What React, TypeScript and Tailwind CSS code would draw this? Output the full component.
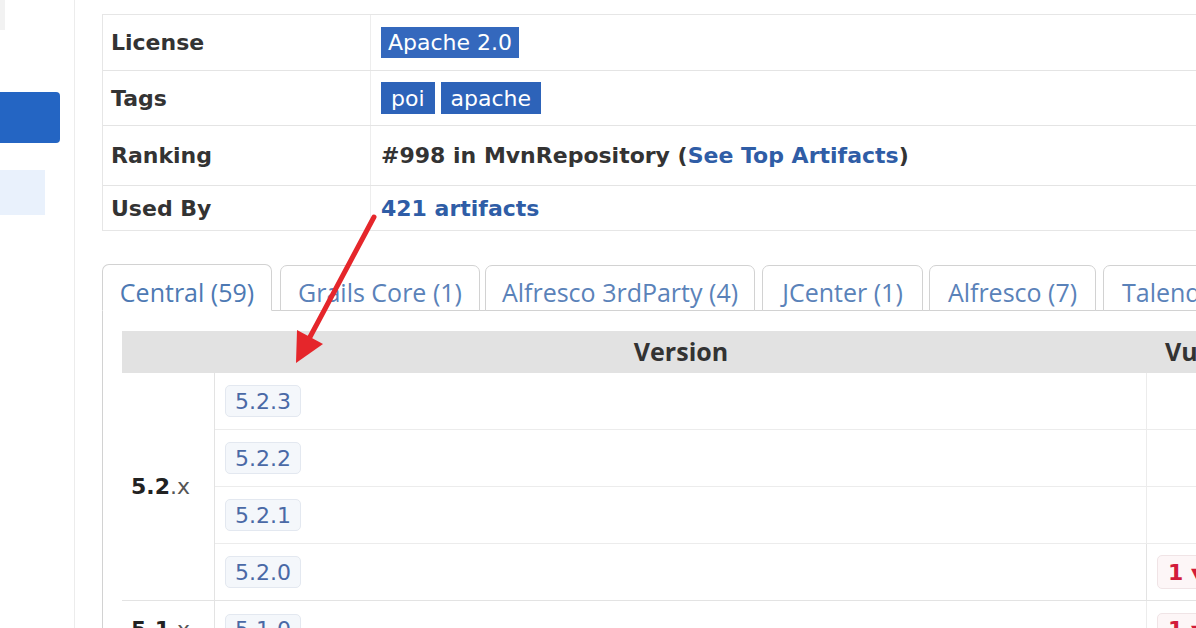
import React from "react";

const verdana = "font-['DejaVu_Sans','Liberation_Sans',sans-serif]";
const open = "font-['Open_Sans','Liberation_Sans',sans-serif]";

function InfoRow({ label, h, last, children }: { label: string; h: string; last?: boolean; children: React.ReactNode }) {
  return (
    <div className={`flex ${h} ${last ? "" : "border-b border-[#e4e4e4]"}`}>
      <div className="w-[268px] shrink-0 border-r border-[#ededed] pl-[8px] flex items-center font-bold text-[22px] text-[#333]">
        {label}
      </div>
      <div className="flex-1 pl-[10px] flex items-center text-[22px]">{children}</div>
    </div>
  );
}

function VerBadge({ v }: { v: string }) {
  return (
    <span className="inline-flex items-center h-[32px] px-[9px] rounded-[5px] bg-[#f4f7fb] border border-[#e3e8f0] text-[22px] text-[#4a69a6]">
      {v}
    </span>
  );
}

function VulnBadge() {
  return (
    <span className="inline-flex items-center h-[34px] px-[10px] rounded-[5px] bg-[#fdf6f7] border border-[#f0e4e6] text-[22px] font-bold text-[#d21c3a] whitespace-nowrap">
      1 ▾
    </span>
  );
}

const tabBase =
  "shrink-0 h-[46px] -mb-px pt-[10px] flex items-center justify-center rounded-t-[7px] border border-[#d2d2d2] bg-white text-[25px] text-[#5a82b9] whitespace-nowrap overflow-hidden";

export default function App() {
  const versions = ["5.2.3", "5.2.2", "5.2.1", "5.2.0"];
  return (
    <div className={`relative w-[1196px] h-[628px] overflow-hidden bg-white flex ${verdana}`}>
      <aside className="w-[75px] shrink-0 border-r border-[#ececec] flex flex-col">
        <div className="h-[30px] w-[5px] bg-[#f2f2f2]" />
        <div className="mt-[62px] h-[51px] w-[60px] bg-[#2465c3] rounded-r-[4px]" />
        <div className="mt-[27px] h-[45px] w-[45px] bg-[#e9f1fc]" />
      </aside>

      <main className="flex-1 min-w-0 pl-[27px] pt-[14px]">
        <div className="w-[1130px] border border-[#e6e6e6]">
          <InfoRow label="License" h="h-[56px]">
            <span className="inline-flex items-center h-[31px] px-[7px] bg-[#3468bd] text-white">Apache 2.0</span>
          </InfoRow>
          <InfoRow label="Tags" h="h-[55px]">
            <div className="flex gap-[6px]">
              <span className="inline-flex items-center h-[32px] px-[10px] bg-[#2d63b9] text-white">poi</span>
              <span className="inline-flex items-center h-[32px] px-[10px] bg-[#2d63b9] text-white">apache</span>
            </div>
          </InfoRow>
          <InfoRow label="Ranking" h="h-[60px]">
            <span className="font-bold text-[#333] whitespace-nowrap">
              #998 in MvnRepository (<span className="text-[#2f5da6]">See Top Artifacts</span>)
            </span>
          </InfoRow>
          <InfoRow label="Used By" h="h-[44px]" last>
            <span className="font-bold text-[#2f5da6]">421 artifacts</span>
          </InfoRow>
        </div>

        <div className={`mt-[34px] flex items-end h-[46px] border-b border-[#d2d2d2] w-[1130px] ${open}`}>
          <div className="shrink-0 w-[170px] h-[47px] -mb-px pt-[10px] flex items-center justify-center rounded-t-[7px] border border-[#d2d2d2] border-b-white bg-white text-[25px] text-[#4d79b3] whitespace-nowrap">
            Central (59)
          </div>
          <div className={`${tabBase} w-[200px] ml-[8px]`}>Grails Core (1)</div>
          <div className={`${tabBase} w-[270px] ml-[5px]`}>Alfresco 3rdParty (4)</div>
          <div className={`${tabBase} w-[161px] ml-[7px]`}>JCenter (1)</div>
          <div className={`${tabBase} w-[167px] ml-[6px]`}>Alfresco (7)</div>
          <div className={`${tabBase} w-[200px] ml-[7px] justify-start pl-[18px]`}>Talend Update (1)</div>
        </div>

        <div className="w-[1130px] h-[400px] border-l border-[#d2d2d2] pl-[19px] pt-[20px]">
          <div className="grid grid-cols-[93px_932px_200px]">
            <div className="h-[42px] bg-[#e2e2e2]" />
            <div className={`h-[42px] bg-[#e2e2e2] flex items-center justify-center font-bold text-[25px] text-[#333] ${open}`}>
              Version
            </div>
            <div className={`h-[42px] bg-[#e2e2e2] flex items-center pl-[18px] font-bold text-[25px] text-[#333] whitespace-nowrap ${open}`}>
              Vulnerabilities
            </div>

            <div className="row-span-4 border-r border-b border-[#e3e3e3] pl-[9px] flex items-center text-[22px]">
              <span className="font-bold text-[#222]">5.2</span>
              <span className="text-[#555]">.x</span>
            </div>
            {versions.map((v, i) => (
              <React.Fragment key={v}>
                <div className={`h-[57px] border-r border-b ${i === 3 ? "border-[#e3e3e3]" : "border-[#ececec]"} pl-[10px] flex items-center`}>
                  <VerBadge v={v} />
                </div>
                <div className={`h-[57px] border-b ${i === 3 ? "border-[#e3e3e3]" : "border-[#ececec]"} pl-[10px] flex items-center`}>
                  {i === 3 && <VulnBadge />}
                </div>
              </React.Fragment>
            ))}

            <div className="h-[57px] border-r border-[#e3e3e3] pl-[9px] flex items-center text-[22px]">
              <span className="font-bold text-[#222]">5.1</span>
              <span className="text-[#555]">.x</span>
            </div>
            <div className="h-[57px] border-r border-[#ececec] pl-[10px] flex items-center">
              <VerBadge v="5.1.0" />
            </div>
            <div className="h-[57px] pl-[10px] flex items-center">
              <VulnBadge />
            </div>
          </div>
        </div>
      </main>

      <svg className="absolute left-0 top-0 pointer-events-none" width="1196" height="628" viewBox="0 0 1196 628">
        <line x1="374" y1="217" x2="310" y2="337" stroke="#e5262b" strokeWidth="5" strokeLinecap="round" />
        <polygon points="296,363 297,330 323,344" fill="#e5262b" />
      </svg>
    </div>
  );
}
